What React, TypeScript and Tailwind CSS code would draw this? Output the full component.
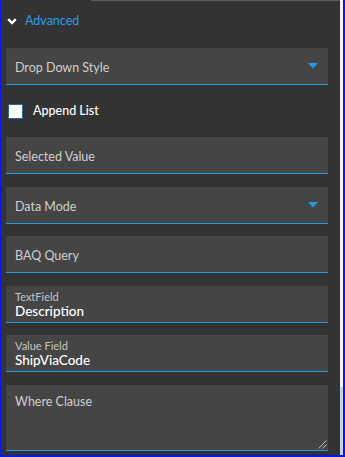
import React from "react";

const font = { fontFamily: "Lato, 'Open Sans', sans-serif" };

function Caret() {
  return (
    <svg width="10" height="6" viewBox="0 0 10 6" className="shrink-0">
      <path d="M0 0 H10 L5 5.5 Z" fill="#229bea" />
    </svg>
  );
}

function Field({ label, dropdown, className = "" }: { label: string; dropdown?: boolean; className?: string }) {
  return (
    <div className={`h-[37px] bg-[#454545] border-b border-[#1f9ae6] flex items-center justify-between pl-[9px] pr-[10px] ${className}`}>
      <span className="text-[12.5px] leading-[16px] pt-[3px] text-[#cfcfcf]">{label}</span>
      {dropdown && <Caret />}
    </div>
  );
}

function ValueField({ label, value, className = "" }: { label: string; value: string; className?: string }) {
  return (
    <div className={`h-[37px] bg-[#454545] border-b border-[#1f9ae6] flex flex-col justify-center pl-[9px] pt-[1px] ${className}`}>
      <span className="text-[11px] leading-[12px] text-[#c4c4c4]">{label}</span>
      <span className="text-[13.5px] leading-[16px] text-white font-medium">{value}</span>
    </div>
  );
}

export default function App() {
  return (
    <div className="w-[345px] h-[457px] flex border-l border-r-2 border-b-2 border-[#0a14f0] bg-white" style={font}>
      <div className="flex-1 bg-[#333333] relative pl-[5px] pr-[12px]">
        <div className="absolute top-0 left-[90px] right-0 h-px bg-[#5c5c5c]" />
        <div className="h-[48px] flex items-center gap-[8px] pl-[1px] pb-[6px]">
          <svg width="10" height="7" viewBox="0 0 10 7">
            <path d="M1.2 1.2 L5 5 L8.8 1.2" stroke="#ffffff" strokeWidth="2.4" fill="none" />
          </svg>
          <span className="text-[12.5px] text-[#2a9de8]">Advanced</span>
        </div>
        <Field label="Drop Down Style" dropdown />
        <div className="h-[52px] flex items-center gap-[10px] pl-[2px]">
          <div className="w-[15px] h-[15px] bg-white border border-[#2a6a99]" />
          <span className="text-[12.5px] text-white font-medium">Append List</span>
        </div>
        <Field label="Selected Value" />
        <Field label="Data Mode" dropdown className="mt-[13px]" />
        <Field label="BAQ Query" className="mt-[12px]" />
        <ValueField label="TextField" value="Description" className="mt-[13px]" />
        <ValueField label="Value Field" value="ShipViaCode" className="mt-[12px]" />
        <div className="mt-[13px] h-[66px] bg-[#454545] border-b border-[#1f9ae6] pl-[9px] pt-[9px] relative">
          <div className="text-[12.5px] leading-[16px] text-[#cfcfcf]">Where Clause</div>
          <svg width="9" height="9" viewBox="0 0 9 9" className="absolute right-[1px] bottom-[1px]">
            <path d="M0.5 8.5 L8.5 0.5 M4.5 8.5 L8.5 4.5" stroke="#bdbdbd" strokeWidth="1" />
          </svg>
        </div>
      </div>
      <div className="w-[3px] bg-[#f4f4f4] flex flex-col justify-end">
        <div className="h-[68px] bg-[#c9cfe0]" />
      </div>
    </div>
  );
}
